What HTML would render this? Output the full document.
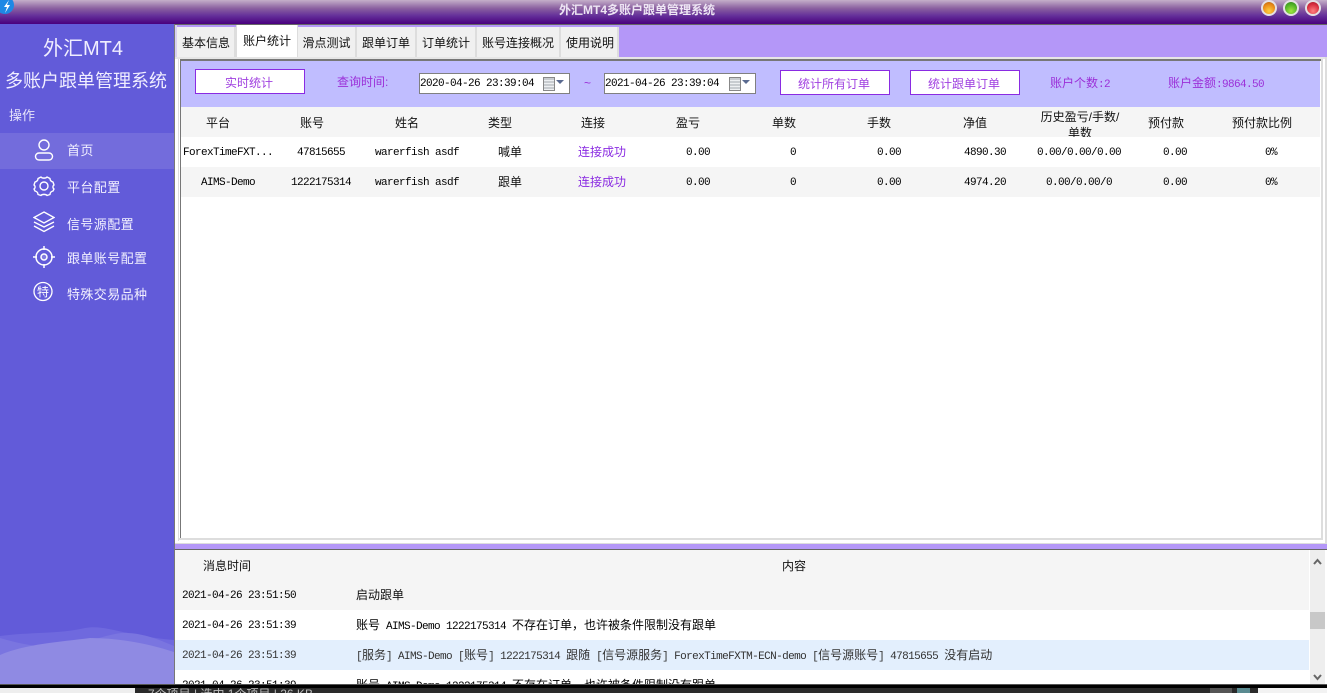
<!DOCTYPE html>
<html lang="zh"><head><meta charset="utf-8"><style>
html,body{margin:0;padding:0;width:1327px;height:693px;overflow:hidden;background:#fff}
body{position:relative;font-family:"Liberation Sans","Noto Sans CJK SC",sans-serif;font-size:12px;color:#111}
div,span.a{position:absolute;white-space:nowrap}
.c{text-align:center;transform:translateX(-50%)}
.m{font-family:"Liberation Mono","Noto Sans CJK SC",monospace;font-size:11px;letter-spacing:-.6px;line-height:14px;color:#000}
.z{font-size:12px;letter-spacing:0;font-family:"Noto Sans CJK SC",sans-serif}
.h{top:116px;line-height:14px}
.tab{top:27px;height:30px;line-height:33px;text-align:center;background:#f0f0f0;border-right:2px solid #ddd;box-sizing:border-box;color:#111}
.btn{background:#fff;border:1px solid #8a2be2;box-sizing:border-box;color:#a040e0;text-align:center;line-height:26px;height:25px;padding-right:2px}
.p{color:#9b30d8;line-height:14px}
.n{color:#f2f0ff;left:67px;font-size:13px;line-height:16px;letter-spacing:.4px}
.date{top:73px;height:21px;background:#fff;border:1px solid #808080;box-sizing:border-box}
.cal{position:absolute;top:3px;width:10px;height:12px;background:repeating-linear-gradient(#c8ccd0 0 2px,#eef0f2 2px 3px);border:1px solid #888}
.ar{position:absolute;top:6px;width:0;height:0;border-left:4px solid transparent;border-right:4px solid transparent;border-top:4px solid #5a6a90}
.b{position:absolute;top:0;width:16px;height:16px;border-radius:50%;border:2px solid #e4e0e4;box-sizing:border-box}
.g{top:144px;line-height:17px}
</style></head><body>
<div style="left:0;top:0;width:1327px;height:24px;background:linear-gradient(#c4afca,#8a5fa0 35%,#65309a 65%,#48007e)"></div>
<div style="left:0;top:24px;width:1327px;height:1px;background:#666"></div>
<div class="c" style="left:637px;top:2px;font-size:12px;line-height:16px;font-weight:bold;color:#eee6f4">外汇MT4多账户跟单管理系统</div>
<svg style="position:absolute;left:0;top:0" width="15" height="16"><circle cx="5" cy="5" r="9" fill="#1e88e5"/><path d="M9 0 L4 7 H7 L5 13 L10 5 H7 Z" fill="#fff"/></svg>
<div class="b" style="left:1261px;background:radial-gradient(circle at 50% 75%,#ffd040,#e88a18 60%,#b05a10)"></div>
<div class="b" style="left:1283px;background:radial-gradient(circle at 50% 75%,#a0e840,#50b028 60%,#2a8018)"></div>
<div class="b" style="left:1305px;background:radial-gradient(circle at 50% 75%,#ff8080,#d83040 60%,#a01828)"></div>

<!-- sidebar -->
<div style="left:0;top:24px;width:174px;height:660px;background:#625bd9;overflow:hidden">
<svg style="position:absolute;left:0;top:600px" width="174" height="60">
<path d="M0 12 C30 8 60 10 85 4 C105 0 125 12 174 16 V60 H0Z" fill="#6f69de"/>
<path d="M0 14 C20 20 40 24 60 22 C85 20 95 14 115 10 C135 6 155 14 174 22 V60 H0Z" fill="#7a75e0"/>
<path d="M0 31 C25 20 60 18 90 14 C120 14 150 20 174 28 V60 H0Z" fill="#8f8ae3"/>
</svg>
</div>
<div style="left:174px;top:24px;width:1px;height:660px;background:#777"></div>
<div class="c" style="left:83px;top:36px;font-size:20px;line-height:26px;color:#f0eeff">外汇MT4</div>
<div class="c" style="left:86px;top:69px;font-size:18px;line-height:24px;color:#f0eeff">多账户跟单管理系统</div>
<div style="left:9px;top:108px;font-size:13px;line-height:16px;color:#e6e4fa">操作</div>
<div style="left:0;top:133px;width:174px;height:36px;background:#736cdc"></div>
<svg style="position:absolute;left:33px;top:139px" width="22" height="22" fill="none" stroke="#fff" stroke-width="1.4"><circle cx="11" cy="6" r="5"/><rect x="2.500" y="14" width="17" height="7" rx="3.500"/></svg>
<svg style="position:absolute;left:33px;top:175px" width="22" height="22" fill="none" stroke="#fff" stroke-width="1.4"><path d="M8 2 C9 3.500 13 3.500 14 2 L17 3.500 C17 5.500 18 6.500 20 7 L21 10 C19.500 11 19.500 13 21 14 L20 16 C18 16.500 17 18 17 19.500 L14 20.500 C13 19 9 19 8 20.500 L5 19.500 C5 18 4 16.500 2 16 L1 14 C2.500 13 2.500 11 1 10 L2 7 C4 6.500 5 5.500 5 3.500 Z" stroke-linejoin="round"/><circle cx="11" cy="11" r="4"/></svg>
<svg style="position:absolute;left:33px;top:211px" width="22" height="22" fill="none" stroke="#fff" stroke-width="1.4"><path d="M11 1 L21 6.500 L11 12 L1 6.500 Z"/><path d="M1 11 L11 16 L21 11"/><path d="M1 15 L11 20.500 L21 15"/></svg>
<svg style="position:absolute;left:33px;top:246px" width="22" height="22" fill="none" stroke="#fff" stroke-width="1.500"><circle cx="11" cy="11" r="8"/><circle cx="11" cy="11" r="3" fill="#fff" fill-opacity=".2"/><path d="M11 0V4M11 18V22M0 11H4M18 11H22"/></svg>
<svg style="position:absolute;left:33px;top:281px" width="22" height="22"><circle cx="10" cy="10.500" r="9" fill="none" stroke="#fff" stroke-width="1.300"/><text x="10" y="15" text-anchor="middle" font-size="12" fill="#fff" font-family="Noto Sans CJK SC,sans-serif">特</text></svg>
<div class="n" style="top:143px">首页</div>
<div class="n" style="top:180px">平台配置</div>
<div class="n" style="top:217px">信号源配置</div>
<div class="n" style="top:251px">跟单账号配置</div>
<div class="n" style="top:287px">特殊交易品种</div>

<!-- top tab band -->
<div style="left:175px;top:25px;width:1152px;height:32px;background:#b497f8"></div>
<div style="left:175px;top:25px;width:2px;height:32px;background:#d8d0f0"></div>
<div class="tab" style="left:177px;width:59px;padding-left:1px">基本信息</div>
<div class="tab" style="left:236px;top:25px;height:33px;width:62px;background:#fff;line-height:33px;border-left:1px solid #ddd;border-right:1px solid #ddd">账户统计</div>
<div class="tab" style="left:298px;width:59px">滑点测试</div>
<div class="tab" style="left:357px;width:60px">跟单订单</div>
<div class="tab" style="left:417px;width:60px">订单统计</div>
<div class="tab" style="left:477px;width:84px">账号连接概况</div>
<div class="tab" style="left:561px;width:58px;padding-left:2px">使用说明</div>

<!-- panel -->
<div style="left:175px;top:57px;width:1152px;height:487px;background:#fff"></div>
<div style="left:175px;top:57px;width:1152px;height:2px;background:#e6e6e6"></div>
<div style="left:180px;top:59px;width:1141px;height:2px;background:#777"></div>
<div style="left:180px;top:59px;width:1px;height:480px;background:#777"></div>
<div style="left:178px;top:59px;width:1px;height:482px;background:#ddd"></div>
<div style="left:1321px;top:59px;width:2px;height:480px;background:#ddd"></div>
<div style="left:1325px;top:57px;width:2px;height:487px;background:#ddd"></div>
<div style="left:178px;top:538px;width:1145px;height:2px;background:#ddd"></div>
<div style="left:175px;top:543px;width:1152px;height:1px;background:#ddd"></div>

<div style="left:181px;top:61px;width:1139px;height:46px;background:#c0bdff"></div>
<div class="btn" style="left:195px;top:69px;width:110px">实时统计</div>
<div class="p" style="left:337px;top:75px">查询时间:</div>
<div class="date" style="left:419px;width:151px"><span class="m" style="position:absolute;left:0;top:3px">2020-04-26 23:39:04</span><span class="cal" style="left:123px"></span><span class="ar" style="left:136px"></span></div>
<div class="p" style="left:584px;top:76px;font-size:12px">~</div>
<div class="date" style="left:604px;width:152px"><span class="m" style="position:absolute;left:0;top:3px">2021-04-26 23:39:04</span><span class="cal" style="left:124px"></span><span class="ar" style="left:137px"></span></div>
<div class="btn" style="left:780px;top:70px;width:110px">统计所有订单</div>
<div class="btn" style="left:910px;top:70px;width:110px">统计跟单订单</div>
<div class="p" style="left:1050px;top:76px">账户个数<span style="font:11px 'Liberation Mono',monospace;letter-spacing:-.6px">:2</span></div>
<div class="p" style="left:1168px;top:76px">账户金额<span style="font:11px 'Liberation Mono',monospace;letter-spacing:-.6px">:9864.50</span></div>

<!-- table -->
<div style="left:181px;top:107px;width:1139px;height:30px;background:#f5f5f5"></div>
<div style="left:181px;top:167px;width:1139px;height:30px;background:#f5f5f5"></div>
<div class="h c" style="left:218px">平台</div><div class="h c" style="left:312px">账号</div><div class="h c" style="left:407px">姓名</div><div class="h c" style="left:500px">类型</div><div class="h c" style="left:593px">连接</div><div class="h c" style="left:688px">盈亏</div><div class="h c" style="left:784px">单数</div><div class="h c" style="left:879px">手数</div><div class="h c" style="left:975px">净值</div><div class="h c" style="left:1080px;top:110px">历史盈亏/手数/</div>
<div style="left:1000px;top:125px;width:160px;height:12px;overflow:hidden;text-align:center;line-height:16px">单数</div>
<div class="h c" style="left:1166px">预付款</div><div class="h c" style="left:1262px">预付款比例</div>

<div class="m" style="left:183px;top:146px">ForexTimeFXT...</div>
<div class="m c" style="left:321px;top:146px">47815655</div>
<div class="m" style="left:375px;top:146px">warerfish asdf</div>
<div class="c g" style="left:510px">喊单</div>
<div class="c g" style="left:602px;color:#8a2be2">连接成功</div>
<div class="m" style="left:686px;top:146px">0.00</div><div class="m" style="left:790px;top:146px">0</div><div class="m" style="left:877px;top:146px">0.00</div><div class="m" style="left:964px;top:146px">4890.30</div>
<div class="m c" style="left:1079px;top:146px">0.00/0.00/0.00</div><div class="m c" style="left:1175px;top:146px">0.00</div><div class="m c" style="left:1271px;top:146px">0%</div>

<div class="m c" style="left:228px;top:176px">AIMS-Demo</div>
<div class="m c" style="left:321px;top:176px">1222175314</div>
<div class="m" style="left:375px;top:176px">warerfish asdf</div>
<div class="c g" style="left:510px;top:174px">跟单</div>
<div class="c g" style="left:602px;top:174px;color:#8a2be2">连接成功</div>
<div class="m" style="left:686px;top:176px">0.00</div><div class="m" style="left:790px;top:176px">0</div><div class="m" style="left:877px;top:176px">0.00</div><div class="m" style="left:964px;top:176px">4974.20</div>
<div class="m c" style="left:1079px;top:176px">0.00/0.00/0</div><div class="m c" style="left:1175px;top:176px">0.00</div><div class="m c" style="left:1271px;top:176px">0%</div>

<!-- log -->
<div style="left:175px;top:544px;width:1152px;height:5px;background:#b497f8"></div>
<div style="left:175px;top:549px;width:1152px;height:1px;background:#666"></div>
<div style="left:175px;top:550px;width:1152px;height:134px;background:#fff;overflow:hidden">
<div style="left:0;top:0;width:1134px;height:60px;background:#f5f5f5"></div>
<div style="left:0;top:90px;width:1134px;height:30px;background:#e3effd"></div>
<div style="left:28px;top:9px;line-height:14px">消息时间</div>
<div style="left:607px;top:9px;line-height:14px">内容</div>
<div class="m" style="left:7px;top:39px">2021-04-26 23:51:50</div>
<div style="left:181px;top:37px;line-height:17px">启动跟单</div>
<div class="m" style="left:7px;top:69px">2021-04-26 23:51:39</div>
<div class="m" style="left:181px;top:66px;line-height:17px"><span class="z">账号</span> AIMS-Demo 1222175314 <span class="z">不存在订单，也许被条件限制没有跟单</span></div>
<div class="m" style="left:7px;top:99px;color:#333">2021-04-26 23:51:39</div>
<div class="m" style="left:181px;top:96px;line-height:17px;color:#333">[<span class="z">服务</span>] AIMS-Demo [<span class="z">账号</span>] 1222175314 <span class="z">跟随</span> [<span class="z">信号源服务</span>] ForexTimeFXTM-ECN-demo [<span class="z">信号源账号</span>] 47815655 <span class="z">没有启动</span></div>
<div class="m" style="left:7px;top:129px">2021-04-26 23:51:39</div>
<div class="m" style="left:181px;top:126px;line-height:17px"><span class="z">账号</span> AIMS-Demo 1222175314 <span class="z">不存在订单，也许被条件限制没有跟单</span></div>
<div style="left:1135px;top:0;width:15px;height:134px;background:#eee"></div>
<div style="left:1135px;top:62px;width:15px;height:17px;background:#c8c8c8"></div>
<svg style="position:absolute;left:1135px;top:0" width="15" height="134" fill="none" stroke="#666" stroke-width="2"><path d="M4 14 L7.500 10 L11 14"/><path d="M4 125 L7.500 129 L11 125"/></svg>
</div>

<!-- bottom -->
<div style="left:0;top:684px;width:1327px;height:1px;background:#555"></div>
<div style="left:0;top:685px;width:1327px;height:3px;background:#000"></div>
<div style="left:0;top:688px;width:1327px;height:5px;background:#2a2a2a"></div>
<div style="left:0;top:688px;width:135px;height:5px;background:#eee"></div>
<div style="left:1258px;top:688px;width:69px;height:5px;background:#f2f2f2"></div>
<div style="left:1210px;top:688px;width:22px;height:5px;background:#555"></div>
<div style="left:1237px;top:688px;width:13px;height:5px;background:#5a8a90"></div>
<div style="left:148px;top:688px;height:5px;overflow:hidden;font-size:12px;line-height:12px;color:#bbb">7个项目 | 选中 1个项目 | 26 KB</div>
</body></html>
